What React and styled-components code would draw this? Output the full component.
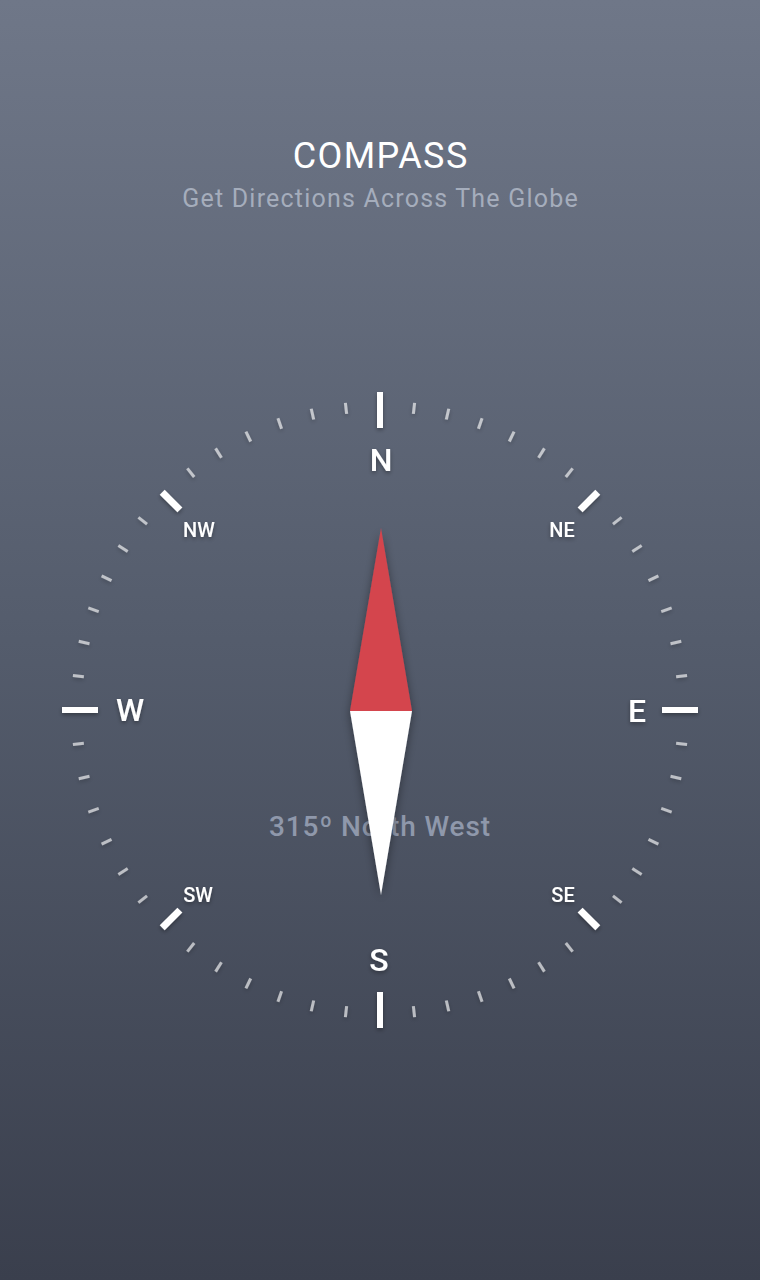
import React from "react";
import styled, { createGlobalStyle } from "styled-components";

const GlobalStyle = createGlobalStyle`
  html, body { margin: 0; padding: 0; }
  body { font-family: Roboto, "Liberation Sans", sans-serif; }
`;

const Page = styled.div`
  width: 760px;
  min-height: 1280px;
  display: flex;
  flex-direction: column;
  align-items: center;
  background: linear-gradient(180deg, #6f7788 0%, #545c6c 50%, #3a3f4d 100%);
  box-sizing: border-box;
  padding-top: 134px;
`;

const Header = styled.header`
  display: flex;
  flex-direction: column;
  align-items: center;
  gap: 6px;
`;

const Title = styled.h1`
  margin: 0;
  font-family: Roboto, "Liberation Sans", sans-serif;
  font-weight: 400;
  font-size: 36px;
  line-height: 44px;
  color: #ffffff;
  letter-spacing: 1.4px;
  padding-left: 1.4px;
`;

const Subtitle = styled.p`
  margin: 0;
  font-family: Roboto, "Liberation Sans", sans-serif;
  font-weight: 400;
  font-size: 25px;
  line-height: 30px;
  color: #a5adbc;
  letter-spacing: 1.2px;
  padding-left: 1.2px;
`;

const Dial = styled.div`
  margin-top: 166px;
  width: 660px;
  height: 660px;
`;

const DialSvg = styled.svg`
  display: block;
  width: 660px;
  height: 660px;
  overflow: visible;
`;

const Label = styled.text`
  font-family: Roboto, "Liberation Sans", sans-serif;
  font-weight: 500;
  font-size: ${(p) => (p.$major ? 32 : 20)}px;
  fill: #ffffff;
`;

const Reading = styled.text`
  font-family: Roboto, "Liberation Sans", sans-serif;
  font-weight: 500;
  font-size: 28px;
  letter-spacing: 0.9px;
  fill: #8f98ab;
`;

const CX = 330;
const CY = 330;
const OX = 50;
const OY = 380;

const labels = [
  { t: "N", x: 381, y: 460, major: true },
  { t: "NE", x: 562, y: 530 },
  { t: "E", x: 637, y: 711, major: true },
  { t: "SE", x: 563, y: 895 },
  { t: "S", x: 379, y: 960, major: true },
  { t: "SW", x: 198, y: 895 },
  { t: "W", x: 130, y: 710, major: true },
  { t: "NW", x: 199, y: 530 },
];

function Ticks() {
  const out = [];
  for (let i = 0; i < 56; i++) {
    const a = (i * 2 * Math.PI) / 56;
    let r1, r2, w, color;
    if (i % 14 === 0) {
      r1 = 282; r2 = 318; w = 6; color = "#ffffff";
    } else if (i % 7 === 0) {
      r1 = 283; r2 = 308; w = 7; color = "#ffffff";
    } else {
      r1 = 298; r2 = 309; w = 3; color = "rgba(255,255,255,0.62)";
    }
    const s = Math.sin(a);
    const c = Math.cos(a);
    out.push(
      <line
        key={i}
        x1={CX + r1 * s}
        y1={CY - r1 * c}
        x2={CX + r2 * s}
        y2={CY - r2 * c}
        stroke={color}
        strokeWidth={w}
      />
    );
  }
  return <g filter="url(#tickShadow)">{out}</g>;
}

export default function App() {
  const nx = 381 - OX;
  return (
    <Page>
      <GlobalStyle />
      <Header>
        <Title>COMPASS</Title>
        <Subtitle>Get Directions Across The Globe</Subtitle>
      </Header>
      <Dial>
        <DialSvg viewBox="0 0 660 660">
          <defs>
            <filter id="tickShadow" x="-20%" y="-20%" width="140%" height="140%">
              <feDropShadow dx="0" dy="2" stdDeviation="2" floodColor="#000" floodOpacity="0.35" />
            </filter>
            <filter id="needleShadow" x="-100%" y="-20%" width="300%" height="140%">
              <feDropShadow dx="0" dy="3" stdDeviation="5" floodColor="#000" floodOpacity="0.4" />
            </filter>
          </defs>
          <Ticks />
          <g filter="url(#tickShadow)">
            {labels.map((l) => {
              const fs = l.major ? 32 : 20;
              return (
                <Label
                  key={l.t}
                  $major={l.major}
                  x={l.x - OX}
                  y={l.y - OY + (fs * 0.711) / 2}
                  textAnchor="middle"
                >
                  {l.t}
                </Label>
              );
            })}
          </g>
          <Reading x={380 - OX} y={826 - OY + 10} textAnchor="middle">
            315º North West
          </Reading>
          <g filter="url(#needleShadow)">
            <polygon
              points={`${nx},${528 - OY} ${nx + 31},${711 - OY} ${nx - 31},${711 - OY}`}
              fill="#d4454d"
            />
            <polygon
              points={`${nx - 31},${711 - OY} ${nx + 31},${711 - OY} ${nx},${895 - OY}`}
              fill="#ffffff"
            />
          </g>
        </DialSvg>
      </Dial>
    </Page>
  );
}
